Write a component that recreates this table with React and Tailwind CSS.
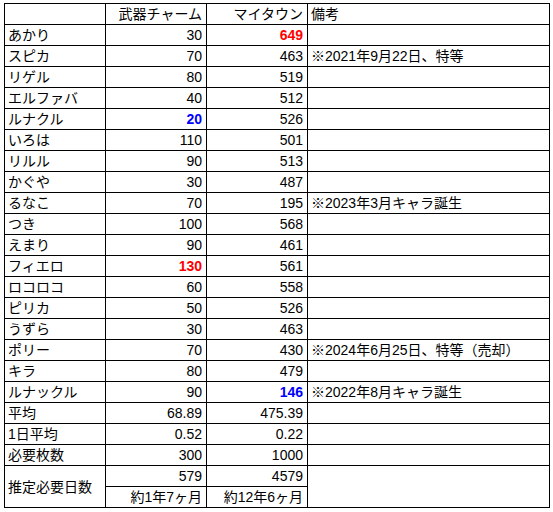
import React from "react";

const rows = [
  { name: "あかり", charm: "30", town: "649", townColor: "red" },
  { name: "スピカ", charm: "70", town: "463", note: "※2021年9月22日、特等" },
  { name: "リゲル", charm: "80", town: "519" },
  { name: "エルファバ", charm: "40", town: "512" },
  { name: "ルナクル", charm: "20", town: "526", charmColor: "blue" },
  { name: "いろは", charm: "110", town: "501" },
  { name: "リルル", charm: "90", town: "513" },
  { name: "かぐや", charm: "30", town: "487" },
  { name: "るなこ", charm: "70", town: "195", note: "※2023年3月キャラ誕生" },
  { name: "つき", charm: "100", town: "568" },
  { name: "えまり", charm: "90", town: "461" },
  { name: "フィエロ", charm: "130", town: "561", charmColor: "red" },
  { name: "ロコロコ", charm: "60", town: "558" },
  { name: "ピリカ", charm: "50", town: "526" },
  { name: "うずら", charm: "30", town: "463" },
  { name: "ポリー", charm: "70", town: "430", note: "※2024年6月25日、特等（売却）" },
  { name: "キラ", charm: "80", town: "479" },
  { name: "ルナックル", charm: "90", town: "146", townColor: "blue", note: "※2022年8月キャラ誕生" },
  { name: "平均", charm: "68.89", town: "475.39" },
  { name: "1日平均", charm: "0.52", town: "0.22" },
  { name: "必要枚数", charm: "300", town: "1000" },
];

const colorClass = (c) =>
  c === "red" ? "font-bold text-[#ff0000]" : c === "blue" ? "font-bold text-[#0000ff]" : "";

const cell = "border border-black h-[21px] p-0 align-middle leading-[16px]";

const App = () => {
  return (
    <div className="bg-white w-[553px] h-[512px] pt-[3px] pl-[4px]" style={{ fontFamily: '"Liberation Sans", "Noto Sans CJK JP", sans-serif' }}>
      <table className="border-collapse text-[14px] text-black table-fixed w-[545px]">
        <colgroup>
          <col className="w-[101px]" />
          <col className="w-[101px]" />
          <col className="w-[101px]" />
          <col className="w-[242px]" />
        </colgroup>
        <tbody>
          <tr>
            <td className={cell}></td>
            <td className={`${cell} text-right pr-[4px]`}>武器チャーム</td>
            <td className={`${cell} text-right pr-[4px]`}>マイタウン</td>
            <td className={`${cell} pl-[3px]`}>備考</td>
          </tr>
          {rows.map((r) => (
            <tr key={r.name}>
              <td className={`${cell} pl-[3px]`}>{r.name}</td>
              <td className={`${cell} text-right pr-[4px] ${colorClass(r.charmColor)}`}>{r.charm}</td>
              <td className={`${cell} text-right pr-[4px] ${colorClass(r.townColor)}`}>{r.town}</td>
              <td className={`${cell} pl-[3px] whitespace-nowrap`}>{r.note}</td>
            </tr>
          ))}
          <tr>
            <td rowSpan={2} className={`${cell} pl-[3px]`}>推定必要日数</td>
            <td className={`${cell} text-right pr-[4px]`}>579</td>
            <td className={`${cell} text-right pr-[4px]`}>4579</td>
            <td rowSpan={2} className={cell}></td>
          </tr>
          <tr>
            <td className={`${cell} text-right pr-[4px]`}>約1年7ヶ月</td>
            <td className={`${cell} text-right pr-[4px]`}>約12年6ヶ月</td>
          </tr>
        </tbody>
      </table>
    </div>
  );
};

export default App;
